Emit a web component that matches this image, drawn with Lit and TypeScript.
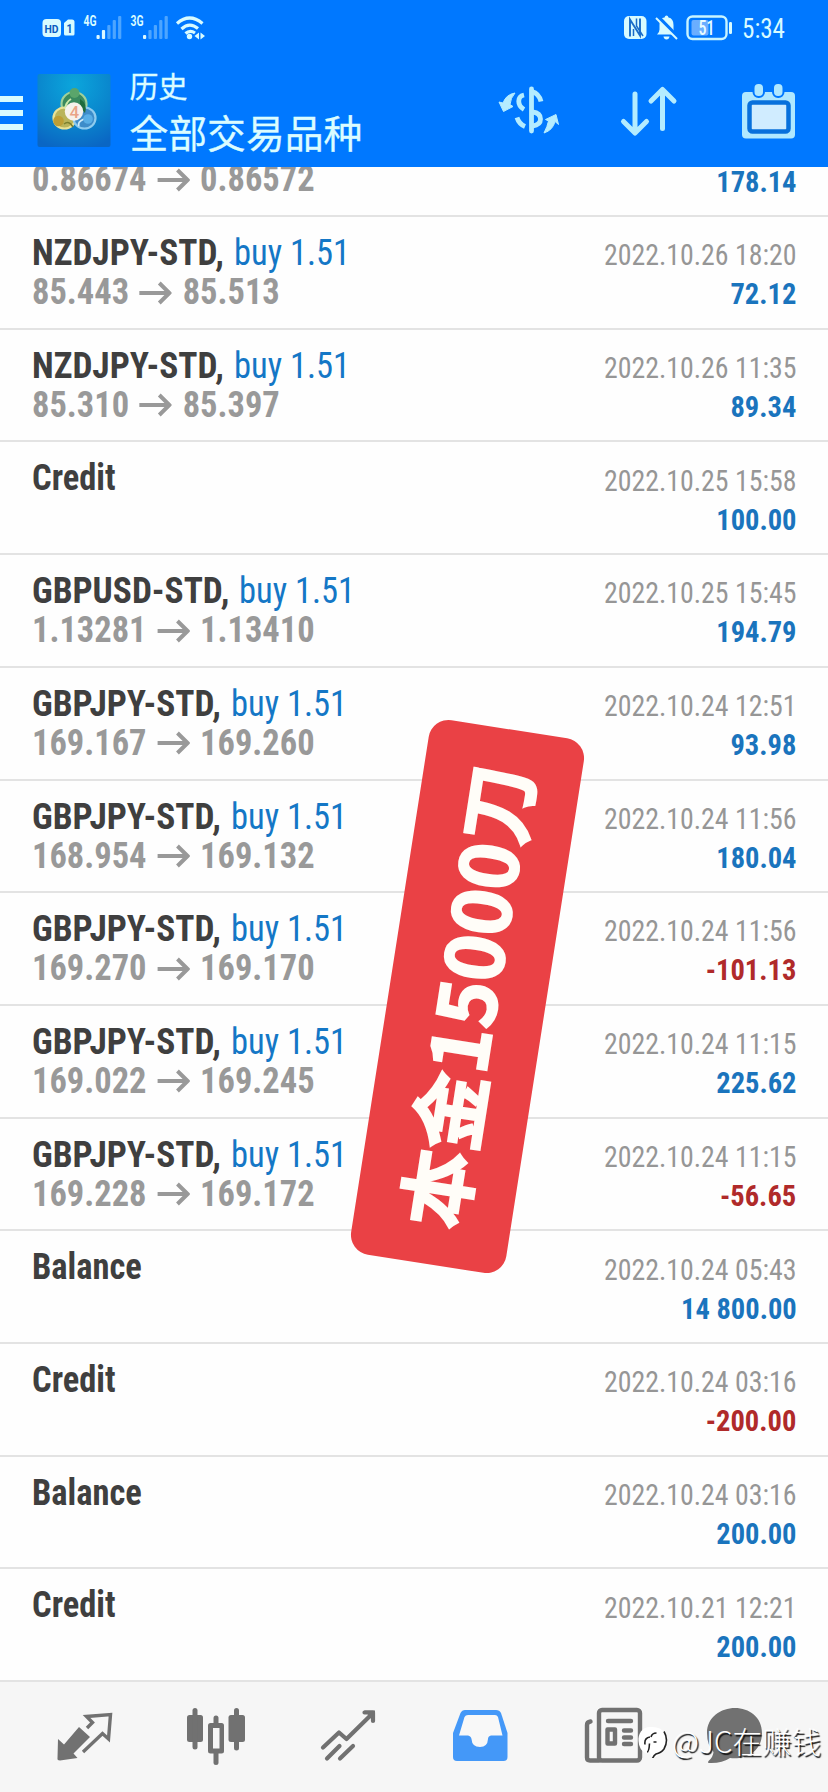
import { LitElement, html, svg, css, nothing } from "lit";
import { customElement, property } from "lit/decorators.js";

interface Deal {
  name: string;
  lot?: string;
  from?: string;
  to?: string;
  time: string;
  amount: string;
}

const deal = (name: string, from: string, to: string, time: string, amount: string): Deal => ({
  name: name + "-STD,", lot: "buy 1.51", from, to, time, amount,
});

const DEALS: Deal[] = [
  { name: "", from: "0.86674", to: "0.86572", time: "", amount: "178.14" },
  deal("NZDJPY", "85.443", "85.513", "2022.10.26 18:20", "72.12"),
  deal("NZDJPY", "85.310", "85.397", "2022.10.26 11:35", "89.34"),
  { name: "Credit", time: "2022.10.25 15:58", amount: "100.00" },
  deal("GBPUSD", "1.13281", "1.13410", "2022.10.25 15:45", "194.79"),
  deal("GBPJPY", "169.167", "169.260", "2022.10.24 12:51", "93.98"),
  deal("GBPJPY", "168.954", "169.132", "2022.10.24 11:56", "180.04"),
  deal("GBPJPY", "169.270", "169.170", "2022.10.24 11:56", "-101.13"),
  deal("GBPJPY", "169.022", "169.245", "2022.10.24 11:15", "225.62"),
  deal("GBPJPY", "169.228", "169.172", "2022.10.24 11:15", "-56.65"),
  { name: "Balance", time: "2022.10.24 05:43", amount: "14 800.00" },
  { name: "Credit", time: "2022.10.24 03:16", amount: "-200.00" },
  { name: "Balance", time: "2022.10.24 03:16", amount: "200.00" },
  { name: "Credit", time: "2022.10.21 12:21", amount: "200.00" },
];

@customElement("deal-row")
class DealRow extends LitElement {
  @property({ attribute: false }) deal!: Deal;

  static styles = css`
    :host { display: flex; flex: none; box-sizing: border-box; height: 112.7px; justify-content: space-between;
      padding: 17px 31.5px 0 32.3px; border-bottom: 2px solid #e3e3e3; font-family: Roboto, sans-serif;
      font-stretch: 75%; white-space: nowrap; }
    .left, .right { display: flex; flex-direction: column; }
    .right { align-items: flex-end; padding-top: 1.3px; }
    .line { display: flex; align-items: center; height: 39px; line-height: 39px; font-size: 36px; width: max-content; }
    .name { font-weight: 700; color: #3f3f3f; transform: scaleX(.957); transform-origin: 0 50%; }
    .symbol { transform: scaleX(.982); }
    .lot { color: #1477c6; margin-left: 6px; transform: scaleX(.958); transform-origin: 0 50%; }
    .price { font-weight: 700; color: #999; transform: scaleX(.957); transform-origin: 0 50%; }
    .arrow { width: 34px; height: 24px; margin: 0 11px; }
    .time { height: 39px; line-height: 39px; font-size: 30px; color: #969696; transform: scaleX(.928); transform-origin: 100% 50%; }
    .amount { height: 39px; line-height: 39px; font-size: 30px; font-weight: 700; color: #1a74bd;
      transform: scaleX(.95); transform-origin: 100% 50%; }
    .loss { color: #b02a2a; }
  `;

  render() {
    const d = this.deal;
    return html`
      <div class="left">
        <div class="line"><span class="name ${d.lot ? "symbol" : ""}">${d.name}</span>${d.lot ? html`<span class="lot">${d.lot}</span>` : nothing}</div>
        ${d.from
          ? html`<div class="line price"><span>${d.from}</span>
              <svg class="arrow" viewBox="0 0 34 24"><path d="M0 12H31M21 2L31.500 12L21 22" fill="none" stroke="#999" stroke-width="4.200"/></svg>
              <span>${d.to}</span></div>`
          : nothing}
      </div>
      <div class="right">
        <div class="time">${d.time}</div>
        <div class="amount ${d.amount.startsWith("-") ? "loss" : ""}">${d.amount}</div>
      </div>`;
  }
}

const bars = (x: number, on: number) => svg`${[0, 1, 2, 3, 4].map((i) => {
  const h = [4, 9, 14, 19, 23][i];
  return svg`<rect x=${x + i * 5.4} y=${39 - h} width="3.200" height=${h} rx="1" fill="#dcf8ff" opacity=${i < on ? 1 : 0.35}/>`;
})}`;

const statusLeft = svg`
  <rect x="42.500" y="19" width="18.500" height="18" rx="4" fill="#d8fbff"/>
  <text class="tiny" x="44.500" y="32.500" font-size="11.500" textLength="14" lengthAdjust="spacingAndGlyphs" fill="#0a5cc0">HD</text>
  <path d="M64 23l4-3.500h4q2.500 0 2.500 2.500v12q0 1.500-1.500 1.500h-7.500q-1.500 0-1.500-1.500z" fill="#d8fbff"/>
  <text class="tiny" x="66.500" y="33" font-size="13" textLength="6" lengthAdjust="spacingAndGlyphs" fill="#0a5cc0">1</text>
  <text class="tiny" x="83.500" y="26" font-size="14" textLength="13" lengthAdjust="spacingAndGlyphs" fill="#d8fbff">4G</text>
  <text class="tiny" x="130.500" y="26" font-size="14" textLength="13" lengthAdjust="spacingAndGlyphs" fill="#d8fbff">3G</text>
  ${bars(96.5, 2)}${bars(143, 1)}
  <g fill="none" stroke="#d8fbff" stroke-width="3.200">
    <path d="M177 23.500Q189.500 12.500 202.500 23.500"/><path d="M181.500 29Q189.500 21.500 198 28.500"/><path d="M185.500 33.500Q190 29.500 195 33"/>
  </g>
  <circle cx="189.500" cy="36.500" r="2.700" fill="#d8fbff"/><path d="M199 32.500v7l-4.500-3.500zM200.500 32.500v7l4.500-3.500z" fill="#d8fbff"/>`;

const statusRight = svg`
  <rect x="624" y="16" width="22.500" height="23" rx="5" fill="#d8fbff"/>
  <path d="M630 36.500V19.500L640 35.500V18.500" fill="none" stroke="#1a6cc8" stroke-width="1.900"/>
  <path d="M633.500 36V29M636.500 18.500V26L643 36" fill="none" stroke="#1a6cc8" stroke-width="1.500"/>
  <path d="M657 34.500q2.500-2 2.500-5v-4.500q0-7.500 5-7.500q.500-2 2-2t2 2q5 1 5 7.500v4.500q0 3 2.500 5z" fill="#d8fbff"/>
  <path d="M663.500 36.500h6q-.500 3-3 3t-3-3z" fill="#d8fbff"/>
  <path d="M657.500 16.500L678.500 38" stroke="#0078ff" stroke-width="4"/><path d="M656 18L677 39" stroke="#d8fbff" stroke-width="2"/>
  <rect x="687.500" y="16.500" width="39" height="22.500" rx="5" fill="none" stroke="#c8f4ff" stroke-width="2.400"/>
  <rect x="691.500" y="20" width="17" height="15.500" rx="2" fill="#6aaeff"/>
  <rect x="729" y="22" width="3" height="12" rx="1.200" fill="#d8fbff"/>
  <text class="num bold" x="698.500" y="34.500" font-size="20" textLength="16" lengthAdjust="spacingAndGlyphs" fill="#e8fcff">51</text>
  <text class="num" x="742" y="38" font-size="27" textLength="43" lengthAdjust="spacingAndGlyphs" fill="#d8fbff">5:34</text>`;

const logo = svg`
  <defs>
    <radialGradient id="bg" cx=".5" cy=".15" r=".9"><stop offset="0" stop-color="#0ba6dc"/><stop offset=".6" stop-color="#0a84cc"/><stop offset="1" stop-color="#0a66c4"/></radialGradient>
  </defs>
  <rect x="37.500" y="74" width="73" height="73" rx="2" fill="url(#bg)"/>
  <ellipse cx="74" cy="104" rx="12.500" ry="12" fill="#3a8a5e" stroke="#9fd09a" stroke-width="2.200"/>
  <ellipse cx="64.500" cy="118" rx="11" ry="10.500" fill="#b9b45a" stroke="#e9e296" stroke-width="2.200"/>
  <ellipse cx="84.500" cy="118" rx="11" ry="10.500" fill="#3d8cc9" stroke="#8ecbee" stroke-width="2.200"/>
  <path d="M80 99Q88 104 85 113L80 108Z" fill="#1f6b3c"/>
  <path d="M65 109Q66 102 71 99" fill="none" stroke="#cde9a8" stroke-width="2"/>
  <path d="M64 124Q69 120 73 127" fill="none" stroke="#7a7f2e" stroke-width="1.600"/>
  <path d="M79 126Q77 122 84 119" fill="none" stroke="#cdeaf9" stroke-width="1.800"/>
  <circle cx="74.500" cy="93" r="5" fill="#5aa56b"/><circle cx="58.500" cy="121" r="5.300" fill="#bd9e35"/><circle cx="88" cy="119" r="4.800" fill="#58aee6"/>
  <circle cx="74" cy="111.500" r="9.200" fill="#f6f2ec"/>
  <text class="tiny four" x="69.500" y="117.500" font-size="17" fill="#e9a488">4</text>`;

const exchange = svg`
  <g fill="#b4ecff" stroke="#b4ecff" stroke-width="1" stroke-linejoin="round">
    <path d="M499 102L503 103Q506 94.500 515 93Q510.500 98 510 104.500L513 106.500L503.500 111.500Z"/>
    <path d="M558.500 124.500L555 121.500Q553 130 544 133Q547.500 126 548.500 121L545.500 119.500L556 114.500Z"/>
  </g>
  <g fill="none" stroke="#b4ecff" stroke-width="4.800">
    <path d="M531.500 89V131" stroke-linecap="round"/>
    <path d="M524 95C517 96.500 517 105.500 524 109.500"/>
    <path d="M532 91.500Q539 93.500 541 101.500"/>
    <path d="M517 117.500Q519 124 525 126.500"/>
    <path d="M532.500 112Q540.500 113 540.500 119Q540.500 125 532.500 126"/>
  </g>`;

const sort = svg`<g fill="none" stroke="#b4ecff" stroke-width="5" stroke-linecap="round" stroke-linejoin="round">
  <path d="M635 94V132M623.500 121.500L635 133L646.500 121.500M662.500 128.500V90M651 101L662.500 89.500L674 101"/></g>`;

const calendar = svg`
  <rect x="742" y="92" width="53" height="46.500" rx="4" fill="#b0e8ff"/>
  <g fill="#b0e8ff" stroke="#0078ff" stroke-width="2"><rect x="753.500" y="83" width="10.500" height="14" rx="5"/><rect x="773" y="83" width="10.500" height="14" rx="5"/></g>
  <rect x="749.500" y="102.500" width="39" height="29" rx="3" fill="#d0ecff" stroke="#0870dc" stroke-width="4.500"/>`;

const G = "#717171";
const tabs = [
  svg`<path d="M58 1739L64 1744.500L79 1727L90 1737L73.500 1753.500L77.500 1758L60 1760.500Q57 1760.500 57.500 1758Z" fill=${G}/>
    <path d="M87 1728L92.500 1722.500L86.500 1716.500L110.500 1714.500L108.500 1739L102.500 1733.500L83 1752" fill="none" stroke=${G} stroke-width="3.400"/>`,
  svg`<g fill=${G}><rect x="187" y="1715" width="16" height="27" rx="2.500"/><rect x="192.500" y="1708" width="5" height="41.500" rx="2.500"/>
    <rect x="228.500" y="1715" width="16.500" height="27" rx="2.500"/><rect x="234" y="1708" width="5" height="42.500" rx="2.500"/>
    <rect x="208" y="1723" width="16" height="30.500" rx="2.500"/><rect x="213.500" y="1715.500" width="5" height="49.500" rx="2.500"/></g>
    <rect x="213" y="1728" width="6.500" height="20.500" fill="#f6f6f6"/>`,
  svg`<g fill="none" stroke=${G} stroke-width="4.200" stroke-linecap="round" stroke-linejoin="round">
    <path d="M323 1747.500L339 1732.500L346.500 1739L372.500 1713.500M364.500 1712.500H373V1721"/><path d="M339.500 1746L327 1758.500M353 1746L340 1758.500"/></g>
    <path d="M364 1710.500H375V1722Z" fill=${G}/>`,
  svg`<path d="M465 1710H496Q499.500 1710 501 1713L507.500 1733V1757Q507.500 1761 503.500 1761H457Q453 1761 453 1757V1733L460.500 1713Q462 1710 465 1710Z" fill="#4498f8"/>
    <path d="M468 1715H495Q497 1715 498 1717L502.500 1735.500H491Q488 1736 488 1739Q487.500 1747 480 1747Q472 1747 471.500 1739Q471 1736 468 1735.500H459L464.500 1717Q465.500 1715 468 1715Z" fill="#f8f8f8"/>`,
  svg`<g fill="none" stroke=${G} stroke-width="4.400" stroke-linecap="round" stroke-linejoin="round">
    <rect x="599" y="1710" width="41" height="50.500" rx="3"/><path d="M590.500 1721.500Q587 1722 587 1725V1757.500Q587 1760.500 590 1760.500H599M608 1721H631M624 1730.500H631M624 1737.500H631M624 1744H631"/>
    <rect x="607.500" y="1729.500" width="7.500" height="14"/></g>`,
  svg`<path d="M735 1708C749 1708 762 1717 762 1733C762 1752 745 1760 730 1758Q722 1763.500 709 1763Q707 1762.500 709 1760.500Q713 1757 713.500 1752Q707 1745 707 1733C707 1717 721 1708 735 1708Z" fill=${G}/>`,
];

@customElement("app-root")
class AppRoot extends LitElement {
  static styles = css`
    :host { display: flex; flex-direction: column; position: relative; width: 828px; height: 1792px; overflow: hidden;
      background: #fefefe; font-family: Roboto, "Noto Sans CJK SC", sans-serif; }
    .tiny { font-family: Roboto, sans-serif; font-weight: 700; }
    .four { font-weight: 500; }
    .num { font-family: Roboto, sans-serif; font-stretch: 75%; }
    .bold { font-weight: 500; }
    svg { display: block; flex: none; }
    .top { flex: none; height: 166.5px; background: #0078ff; display: flex; flex-direction: column; }
    .status { display: flex; justify-content: space-between; height: 56px; }
    .bar { display: flex; height: 110.5px; }
    .menu { width: 23px; display: flex; flex-direction: column; gap: 7.5px; padding-top: 40px; }
    .menu i { height: 6.3px; background: #d8fbff; }
    .titles { margin-left: 16.5px; width: 343.5px; color: #dbfcff; white-space: nowrap; font-family: "Noto Sans CJK SC", sans-serif;
      -webkit-text-stroke: .3px #dbfcff; }
    .sub { font-size: 29px; line-height: 34px; padding-top: 11.5px; }
    .main { font-size: 38.8px; line-height: 50px; padding-top: 4px; }
    .list { height: 1515.5px; flex: none; display: flex; flex-direction: column; justify-content: flex-end; overflow: hidden; }
    .tabs { flex: 1; background: #f6f6f6; padding-left: 18px; display: flex; }
    .sticker { position: absolute; left: 389.4px; top: 726px; width: 156.6px; height: 541px; border-radius: 20px;
      background: #ea4145; color: #fffdf8; display: flex; align-items: center; justify-content: center;
      transform: rotate(8.9deg); }
    .sticker span { white-space: nowrap; font: 700 78.5px/1 "Noto Sans CJK SC", sans-serif;
      -webkit-text-stroke: 2px #fffdf8; transform: translateX(-3.5px) rotate(-90deg); }
    .mark { position: absolute; left: 638px; top: 1720px; display: flex; align-items: center; gap: 1px; height: 40px; color: #fff;
      font: 300 29.5px/40px "Noto Sans CJK SC", sans-serif; text-shadow: 1.5px 1.5px 1px #111; white-space: nowrap; }
  `;

  render() {
    return html`
      <header class="top">
        <div class="status">
          <svg width="300" height="56" viewBox="0 0 300 56">${statusLeft}</svg>
          <svg width="228" height="56" viewBox="600 0 228 56">${statusRight}</svg>
        </div>
        <div class="bar">
          <div class="menu"><i></i><i></i><i></i></div>
          <svg width="90" height="110" viewBox="23 56 90 110">${logo}</svg>
          <div class="titles"><div class="sub">历史</div><div class="main">全部交易品种</div></div>
          <svg width="120" height="110" viewBox="473 56 120 110">${exchange}</svg>
          <svg width="120" height="110" viewBox="593 56 120 110">${sort}</svg>
          <svg width="115" height="110" viewBox="713 56 115 110">${calendar}</svg>
        </div>
      </header>
      <main class="list">${DEALS.map((d) => html`<deal-row .deal=${d}></deal-row>`)}</main>
      <nav class="tabs">${tabs.map((t, i) => html`<svg width="132" height="109" viewBox="${18 + i * 132} 1682 132 109">${t}</svg>`)}</nav>
      <div class="sticker"><span>本金15000刀</span></div>
      <div class="mark">
        <svg width="33" height="36" viewBox="638 1723 33 36">
          <path d="M652 1728C642 1727 638 1735 638.500 1742Q639 1751 646 1754.500L649 1751L652 1759Q660 1757 664 1751Q668 1742 665 1735Q662 1728 652 1728Z" fill="#fff"/>
          <path d="M645 1745.500Q644 1739 650 1738M651 1738Q652 1734 656.500 1734M647 1753Q649 1753 649.500 1744.500M653.500 1743H656.500M664 1732.500Q669 1741 664 1750Q661 1754 656 1755Q654 1756 652.500 1759.500" fill="none" stroke="#222" stroke-width="1.600"/>
        </svg><span>@JC在赚钱</span>
      </div>`;
  }
}
